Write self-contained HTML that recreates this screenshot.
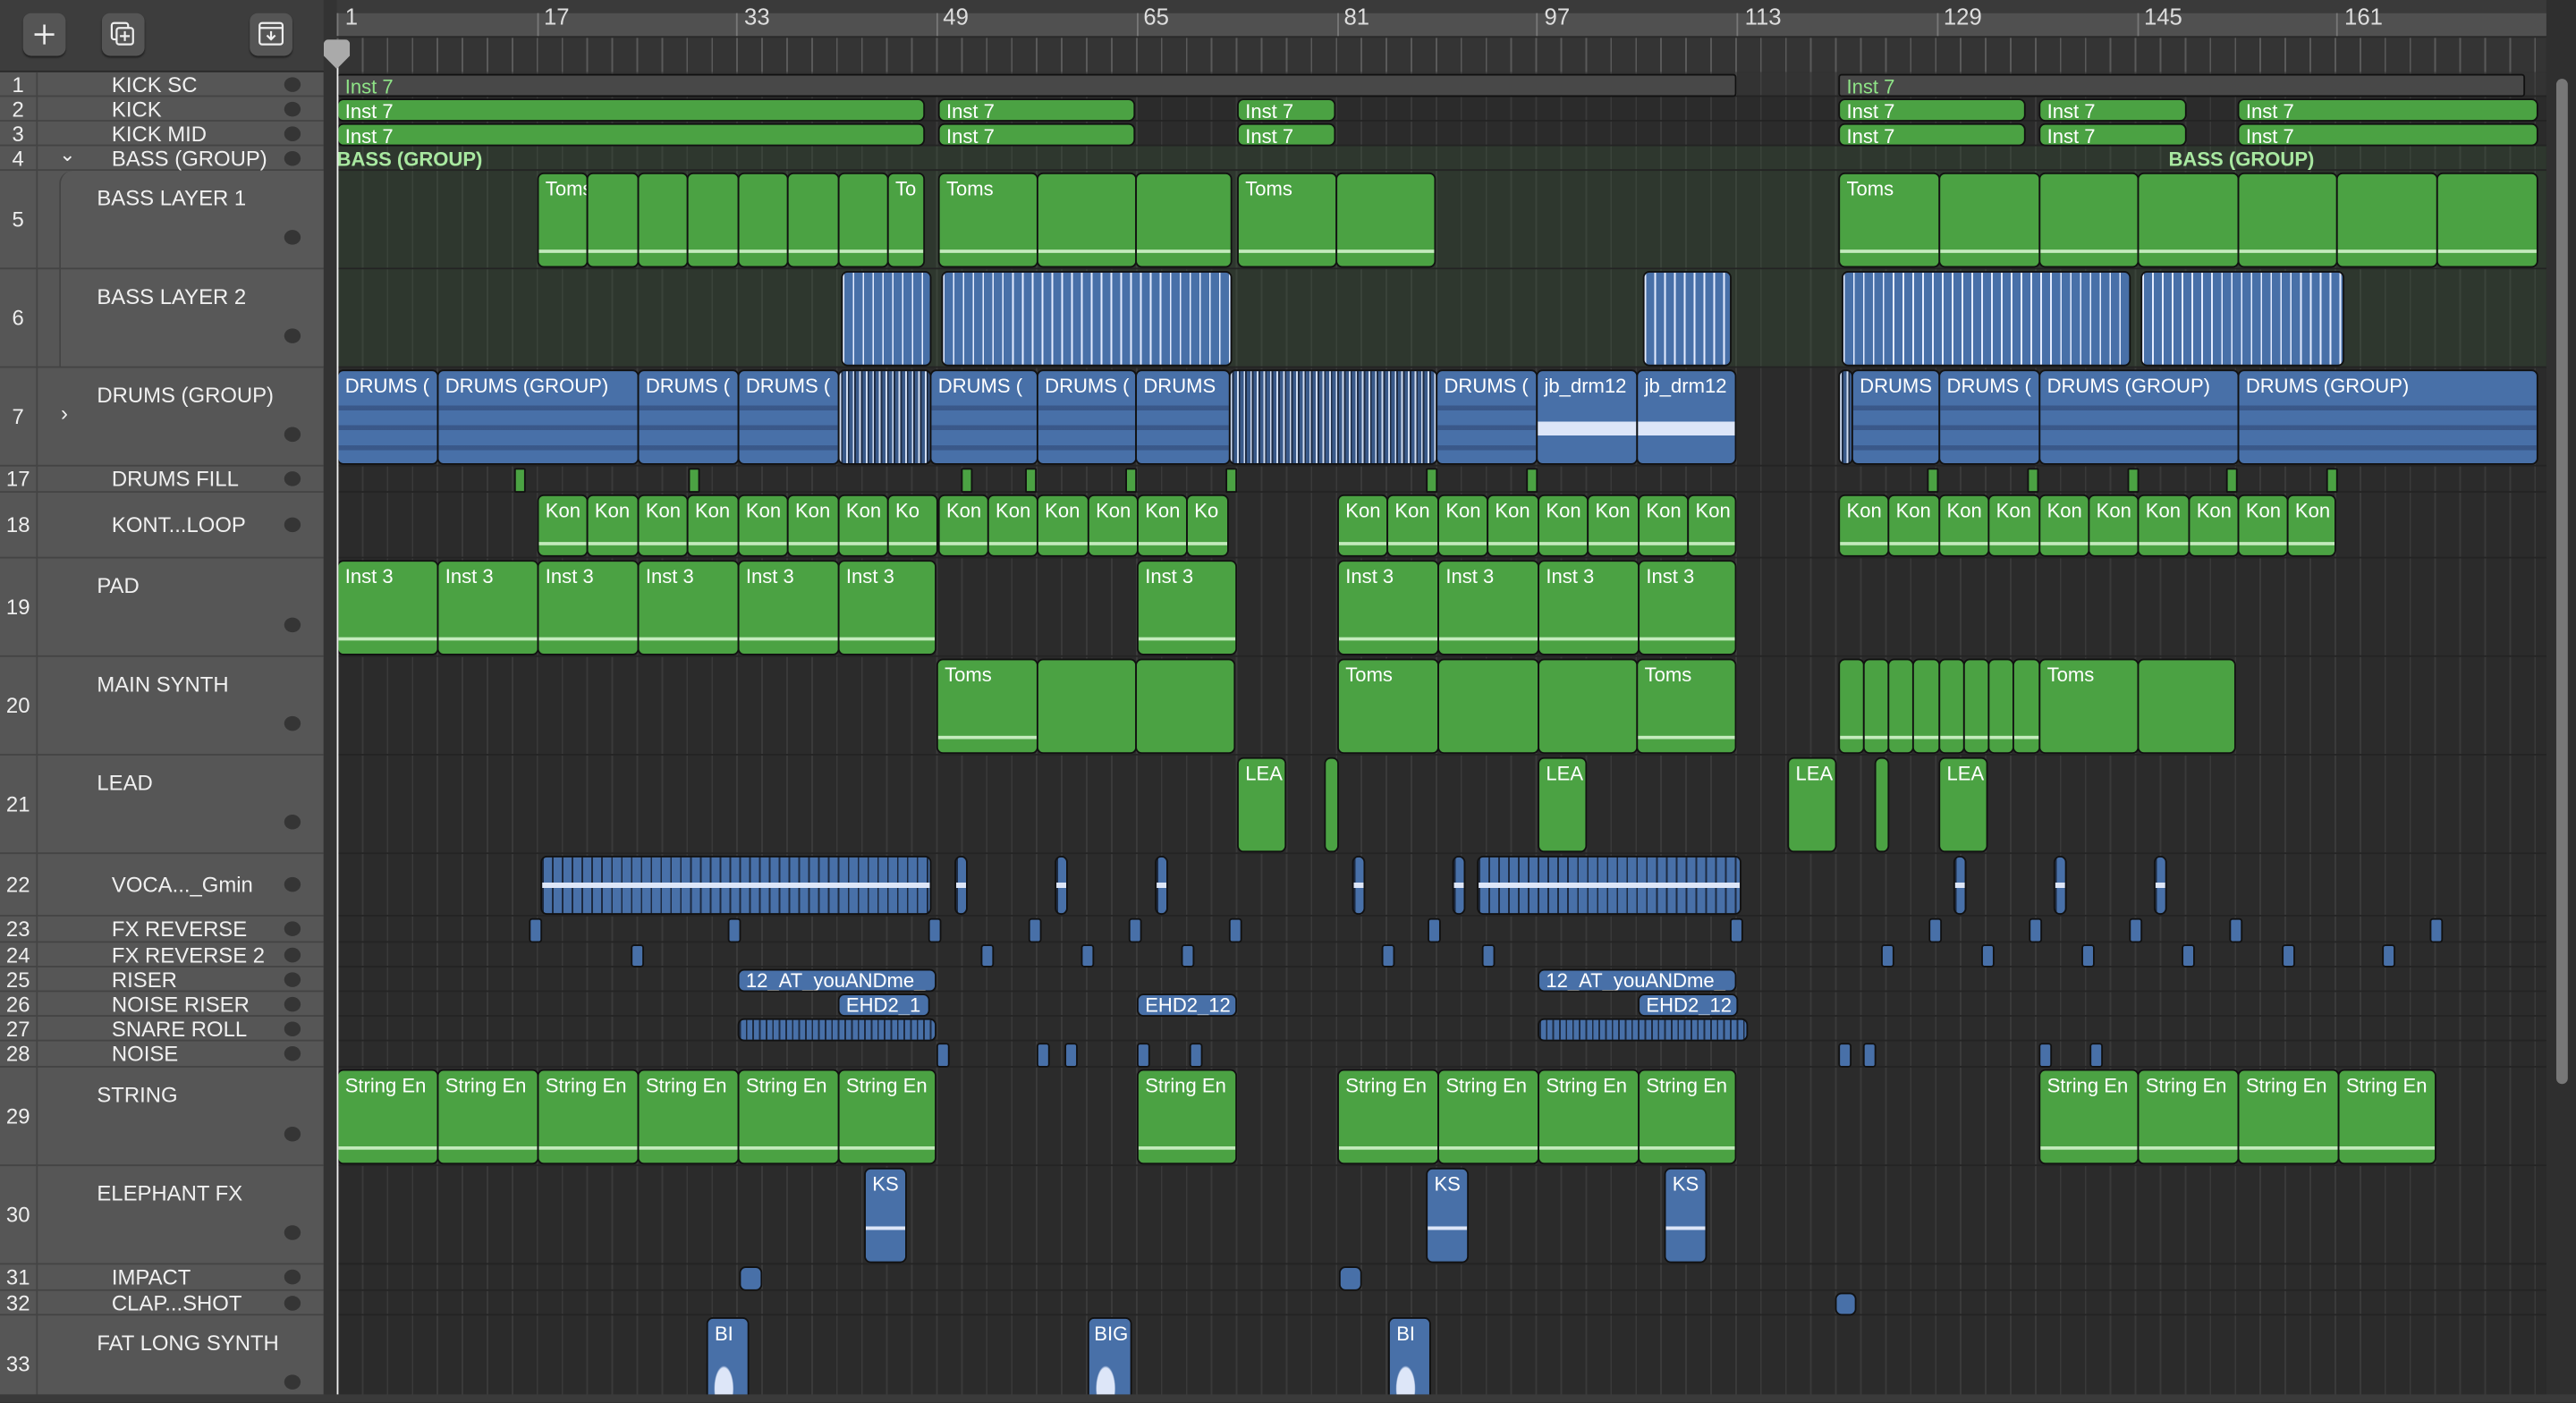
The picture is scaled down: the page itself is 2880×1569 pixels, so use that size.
<!DOCTYPE html>
<html><head><meta charset="utf-8"><style>
*{box-sizing:border-box;margin:0;padding:0}
html,body{width:2880px;height:1568px;overflow:hidden;background:#2b2b2b}
#w{position:absolute;left:0;top:0;width:1568px;height:854px;transform:scale(1.836735);transform-origin:0 0;font-family:"Liberation Sans",sans-serif;background:#2b2b2b;overflow:hidden}
.a{position:absolute}
#tb{left:0;top:0;width:204px;height:44px;background:#3d3d3d;border-bottom:1px solid #2a2a2a}
.btn{position:absolute;top:8px;width:26px;height:26px;border-radius:5px;background:#555;box-shadow:0 1px 1px #222}
#panel{left:0;top:44px;width:197px;height:810px;background:#565656}
.tr{position:absolute;left:0;width:197px;border-bottom:1px solid #444;color:#f0f0f0;font-size:13px}
.tr .n{position:absolute;left:0;width:22px;text-align:center;color:#eee;font-size:13px}
.tr .nm{position:absolute;left:68px;white-space:nowrap}
.tr.T .nm{left:59px;top:4px}
.tr .d{position:absolute;left:173px;width:10px;height:9px;border-radius:50%;background:#353535}
#ncol{left:22px;top:44px;width:1px;height:810px;background:#444}
#div{left:197px;top:0;width:8px;height:854px;background:#333}
#ruler{left:205px;top:8px;width:1345px;height:14px;background:#505050}
#ticks{left:205px;top:22px;width:1345px;height:22px;background:#343434 repeating-linear-gradient(90deg,#5a5a5a 0 1px,transparent 1px 15.2px);background-position:0 0;border-top:1px solid #2a2a2a}
.rn{position:absolute;top:3px;font-size:14px;color:#ddd}
.rl{position:absolute;top:0;width:1px;height:22px;background:#777}
#arr{left:205px;top:44px;width:1345px;height:810px;background:#2b2b2b repeating-linear-gradient(90deg,#3a3a3a 0 1px,transparent 1px 15.2px)}
.rowbg{position:absolute;left:205px;width:1345px;border-bottom:1px solid #242424}
.g,.b,.m{position:absolute;border:1px solid #111;border-radius:4px;color:#fff;font-size:12px;line-height:13px;padding:1px 4px;white-space:nowrap;overflow:hidden}
.g{background:#4ba243}
.b{background:#4870a8}
.m{background:#484848;color:#8fe487;border-radius:2px}
.t::after{content:"";position:absolute;left:0;right:0;bottom:8px;height:2px;background:#c4ebbd}
.k::after{content:"";position:absolute;left:0;right:0;bottom:6px;height:2px;background:#c4ebbd}
.st{background:#4870a8 repeating-linear-gradient(90deg,#e4ecff 0 1px,transparent 1px 6px)}
.dk{background:#3a5a8a repeating-linear-gradient(90deg,#d0dcf0 0 1px,#1e2c44 1px 2px,transparent 2px 4px)}
.vo{background:linear-gradient(transparent 45%,#dde6f8 45% 55%,transparent 55%),repeating-linear-gradient(90deg,#1d2a40 0 1px,#4870a8 1px 6px)}
.y1{top:45px;height:14px}.y2{top:60px;height:14px}.y3{top:75px;height:14px}
.y5{top:105px;height:58px}.y6{top:165px;height:58px}.y7{top:225px;height:58px}
.y17{top:285px;height:15px;padding:0;border-radius:1px}.y18{top:301px;height:38px}.y19{top:341px;height:58px}
.y20{top:401px;height:58px}.y21{top:461px;height:58px}.y22{top:521px;height:36px}
.y23{top:559px;height:15px;padding:0;border-radius:2px}.y24{top:575px;height:14px;padding:0;border-radius:2px}
.y25{top:590px;height:14px;line-height:12px;padding-top:0}.y26{top:605px;height:14px;line-height:12px;padding-top:0}.y27{top:620px;height:14px}.y28{top:635px;height:15px;padding:0;border-radius:2px}
.y29{top:651px;height:58px}.y30{top:711px;height:58px}.y31{top:771px;height:15px;padding:0}.y32{top:787px;height:14px;padding:0}.y33{top:802px;height:52px}
.y5,.y6,.y7,.y18,.y19,.y20,.y21,.y29,.y30,.y33{padding-top:3px}
.dr{font-size:12px}
.dr::after{content:"";position:absolute;left:0;right:0;top:17px;height:40px;background:repeating-linear-gradient(180deg,transparent 0 4px,rgba(40,60,100,.45) 4px 7px,transparent 7px 12px)}
</style></head><body><div id="w">
<div id="tb" class="a">
<div class="btn" style="left:14px"><svg width="26" height="26"><path d="M13 7v12M7 13h12" stroke="#eee" stroke-width="1.4"/></svg></div>
<div class="btn" style="left:62px"><svg width="26" height="26"><rect x="6" y="6" width="10" height="10" rx="1.5" fill="none" stroke="#eee" stroke-width="1.2"/><rect x="9" y="9" width="10" height="10" rx="1.5" fill="#555" stroke="#eee" stroke-width="1.2"/><path d="M14 11v6M11 14h6" stroke="#eee" stroke-width="1.2"/></svg></div>
<div class="btn" style="left:152px"><svg width="26" height="26"><rect x="6" y="6" width="14" height="13" rx="1.5" fill="none" stroke="#eee" stroke-width="1.2"/><path d="M6 9h14M13 11v5M10.5 13.5l2.5 2.5 2.5-2.5" fill="none" stroke="#eee" stroke-width="1.2"/></svg></div>
</div>
<div id="panel" class="a"></div>
<div class="tr" style="top:44px;height:15px"><span class="n">1</span><span class="nm">KICK SC</span><span class="d" style="top:3px"></span></div>
<div class="tr" style="top:59px;height:15px"><span class="n">2</span><span class="nm">KICK</span><span class="d" style="top:3px"></span></div>
<div class="tr" style="top:74px;height:15px"><span class="n">3</span><span class="nm">KICK MID</span><span class="d" style="top:3px"></span></div>
<div class="tr" style="top:89px;height:15px"><span class="n">4</span><span class="a" style="left:36px;top:-2px;font-size:12px">&#8964;</span><span class="nm">BASS (GROUP)</span><span class="d" style="top:3px"></span></div>
<div class="a" style="left:36px;top:104px;width:161px;height:120px;border-left:1px solid #444;border-top-left-radius:8px;background:#585858"></div>
<div class="tr T" style="top:104px;height:60px"><span class="n" style="top:22px">5</span><span class="nm" style="top:9px">BASS LAYER 1</span><span class="d" style="top:36px"></span></div>
<div class="tr T" style="top:164px;height:60px"><span class="n" style="top:22px">6</span><span class="nm" style="top:9px">BASS LAYER 2</span><span class="d" style="top:36px"></span></div>
<div class="tr T" style="top:224px;height:60px"><span class="n" style="top:22px">7</span><span class="a" style="left:37px;top:20px;font-size:13px">&#8250;</span><span class="nm" style="top:9px">DRUMS (GROUP)</span><span class="d" style="top:36px"></span></div>
<div class="tr" style="top:284px;height:16px"><span class="n">17</span><span class="nm">DRUMS FILL</span><span class="d" style="top:3px"></span></div>
<div class="tr" style="top:300px;height:40px"><span class="n" style="top:12px">18</span><span class="nm" style="top:12px">KONT...LOOP</span><span class="d" style="top:15px"></span></div>
<div class="tr T" style="top:340px;height:60px"><span class="n" style="top:22px">19</span><span class="nm" style="top:9px">PAD</span><span class="d" style="top:36px"></span></div>
<div class="tr T" style="top:400px;height:60px"><span class="n" style="top:22px">20</span><span class="nm" style="top:9px">MAIN SYNTH</span><span class="d" style="top:36px"></span></div>
<div class="tr T" style="top:460px;height:60px"><span class="n" style="top:22px">21</span><span class="nm" style="top:9px">LEAD</span><span class="d" style="top:36px"></span></div>
<div class="tr" style="top:520px;height:38px"><span class="n" style="top:11px">22</span><span class="nm" style="top:11px">VOCA..._Gmin</span><span class="d" style="top:14px"></span></div>
<div class="tr" style="top:558px;height:16px"><span class="n">23</span><span class="nm">FX REVERSE</span><span class="d" style="top:3px"></span></div>
<div class="tr" style="top:574px;height:15px"><span class="n">24</span><span class="nm">FX REVERSE 2</span><span class="d" style="top:3px"></span></div>
<div class="tr" style="top:589px;height:15px"><span class="n">25</span><span class="nm">RISER</span><span class="d" style="top:3px"></span></div>
<div class="tr" style="top:604px;height:15px"><span class="n">26</span><span class="nm">NOISE RISER</span><span class="d" style="top:3px"></span></div>
<div class="tr" style="top:619px;height:15px"><span class="n">27</span><span class="nm">SNARE ROLL</span><span class="d" style="top:3px"></span></div>
<div class="tr" style="top:634px;height:16px"><span class="n">28</span><span class="nm">NOISE</span><span class="d" style="top:3px"></span></div>
<div class="tr T" style="top:650px;height:60px"><span class="n" style="top:22px">29</span><span class="nm" style="top:9px">STRING</span><span class="d" style="top:36px"></span></div>
<div class="tr T" style="top:710px;height:60px"><span class="n" style="top:22px">30</span><span class="nm" style="top:9px">ELEPHANT FX</span><span class="d" style="top:36px"></span></div>
<div class="tr" style="top:770px;height:16px"><span class="n">31</span><span class="nm">IMPACT</span><span class="d" style="top:3px"></span></div>
<div class="tr" style="top:786px;height:15px"><span class="n">32</span><span class="nm">CLAP...SHOT</span><span class="d" style="top:3px"></span></div>
<div class="tr T" style="top:801px;height:53px"><span class="n" style="top:22px">33</span><span class="nm" style="top:9px">FAT LONG SYNTH</span><span class="d" style="top:36px"></span></div>
<div id="ncol" class="a"></div>
<div id="div" class="a"></div>
<div class="a" style="left:205px;top:0;width:1363px;height:8px;background:#3a3a3a"></div>
<div id="ruler" class="a">
<span class="rl" style="left:0"></span><span class="rn" style="left:5px;top:-6px">1</span>
<span class="rl" style="left:122px"></span><span class="rn" style="left:126px;top:-6px">17</span>
<span class="rl" style="left:243px"></span><span class="rn" style="left:248px;top:-6px">33</span>
<span class="rl" style="left:365px"></span><span class="rn" style="left:369px;top:-6px">49</span>
<span class="rl" style="left:487px"></span><span class="rn" style="left:491px;top:-6px">65</span>
<span class="rl" style="left:609px"></span><span class="rn" style="left:613px;top:-6px">81</span>
<span class="rl" style="left:730px"></span><span class="rn" style="left:735px;top:-6px">97</span>
<span class="rl" style="left:852px"></span><span class="rn" style="left:857px;top:-6px">113</span>
<span class="rl" style="left:974px"></span><span class="rn" style="left:978px;top:-6px">129</span>
<span class="rl" style="left:1096px"></span><span class="rn" style="left:1100px;top:-6px">145</span>
<span class="rl" style="left:1217px"></span><span class="rn" style="left:1222px;top:-6px">161</span>
</div>
<div id="ticks" class="a"></div>
<div id="arr" class="a"></div>
<div class="rowbg" style="top:44px;height:15px;background:rgba(255,255,255,.04)"></div>
<div class="rowbg" style="top:59px;height:15px"></div>
<div class="rowbg" style="top:74px;height:15px"></div>
<div class="rowbg" style="top:89px;height:15px;background:rgba(60,110,60,.18)"></div>
<div class="rowbg" style="top:104px;height:60px;background:rgba(60,110,60,.18)"></div>
<div class="rowbg" style="top:164px;height:60px;background:rgba(60,110,60,.18)"></div>
<div class="rowbg" style="top:224px;height:60px"></div>
<div class="rowbg" style="top:284px;height:16px"></div>
<div class="rowbg" style="top:300px;height:40px"></div>
<div class="rowbg" style="top:340px;height:60px"></div>
<div class="rowbg" style="top:400px;height:60px"></div>
<div class="rowbg" style="top:460px;height:60px"></div>
<div class="rowbg" style="top:520px;height:38px"></div>
<div class="rowbg" style="top:558px;height:16px"></div>
<div class="rowbg" style="top:574px;height:15px"></div>
<div class="rowbg" style="top:589px;height:15px"></div>
<div class="rowbg" style="top:604px;height:15px"></div>
<div class="rowbg" style="top:619px;height:15px"></div>
<div class="rowbg" style="top:634px;height:16px"></div>
<div class="rowbg" style="top:650px;height:60px"></div>
<div class="rowbg" style="top:710px;height:60px"></div>
<div class="rowbg" style="top:770px;height:16px"></div>
<div class="rowbg" style="top:786px;height:15px"></div>
<div class="rowbg" style="top:801px;height:53px"></div>

<div class="m y1" style="left:205px;width:852px">Inst 7</div>
<div class="m y1" style="left:1119px;width:418px">Inst 7</div>
<div class="g y2" style="left:205px;width:358px">Inst 7</div><div class="g y2" style="left:571px;width:120px">Inst 7</div><div class="g y2" style="left:753px;width:60px">Inst 7</div><div class="g y2" style="left:1119px;width:114px">Inst 7</div><div class="g y2" style="left:1241px;width:90px">Inst 7</div><div class="g y2" style="left:1362px;width:183px">Inst 7</div>
<div class="g y3" style="left:205px;width:358px">Inst 7</div><div class="g y3" style="left:571px;width:120px">Inst 7</div><div class="g y3" style="left:753px;width:60px">Inst 7</div><div class="g y3" style="left:1119px;width:114px">Inst 7</div><div class="g y3" style="left:1241px;width:90px">Inst 7</div><div class="g y3" style="left:1362px;width:183px">Inst 7</div>
<div class="a" style="left:205px;top:90px;font-size:12px;font-weight:bold;color:#a8e8a0">BASS (GROUP)</div>
<div class="a" style="left:1320px;top:90px;font-size:12px;font-weight:bold;color:#a8e8a0">BASS (GROUP)</div>
<div class="g y5 t" style="left:327px;width:31px">Toms</div><div class="g y5 t" style="left:357px;width:32px"></div><div class="g y5 t" style="left:388px;width:31px"></div><div class="g y5 t" style="left:418px;width:32px"></div><div class="g y5 t" style="left:449px;width:31px"></div><div class="g y5 t" style="left:479px;width:32px"></div><div class="g y5 t" style="left:510px;width:31px"></div><div class="g y5 t" style="left:540px;width:23px">To</div>
<div class="g y5 t" style="left:571px;width:61px">Toms</div><div class="g y5 t" style="left:631px;width:61px"></div><div class="g y5 t" style="left:691px;width:59px"></div>
<div class="g y5 t" style="left:753px;width:61px">Toms</div><div class="g y5 t" style="left:813px;width:61px"></div>
<div class="g y5 t" style="left:1119px;width:62px">Toms</div><div class="g y5 t" style="left:1180px;width:62px"></div><div class="g y5 t" style="left:1241px;width:61px"></div><div class="g y5 t" style="left:1301px;width:62px"></div><div class="g y5 t" style="left:1362px;width:61px"></div><div class="g y5 t" style="left:1422px;width:62px"></div><div class="g y5 t" style="left:1483px;width:62px"></div>
<div class="b y6 st" style="left:512px;width:55px"></div><div class="b y6 st" style="left:573px;width:177px"></div><div class="b y6 st" style="left:1000px;width:54px"></div><div class="b y6 st" style="left:1121px;width:176px"></div><div class="b y6 st" style="left:1303px;width:124px"></div>
<div class="b y7 dr" style="left:205px;width:62px">DRUMS (</div><div class="b y7 dr" style="left:266px;width:123px">DRUMS (GROUP)</div><div class="b y7 dr" style="left:388px;width:62px">DRUMS (</div><div class="b y7 dr" style="left:449px;width:62px">DRUMS (</div>
<div class="b y7 dk" style="left:510px;width:57px"></div>
<div class="b y7 dr" style="left:566px;width:66px">DRUMS (</div><div class="b y7 dr" style="left:631px;width:61px">DRUMS (</div><div class="b y7 dr" style="left:691px;width:58px">DRUMS</div>
<div class="b y7 dk" style="left:748px;width:127px"></div>
<div class="b y7 dr" style="left:874px;width:62px">DRUMS (</div>
<div class="b y7" style="left:935px;width:62px;background:linear-gradient(transparent 55%,#dde6f8 55% 70%,transparent 70%),#4870a8">jb_drm12</div><div class="b y7" style="left:996px;width:61px;background:linear-gradient(transparent 55%,#dde6f8 55% 70%,transparent 70%),#4870a8">jb_drm12</div>
<div class="b y7 dk" style="left:1119px;width:9px;padding:0"></div>
<div class="b y7 dr" style="left:1127px;width:54px">DRUMS</div><div class="b y7 dr" style="left:1180px;width:62px">DRUMS (</div><div class="b y7 dr" style="left:1241px;width:122px">DRUMS (GROUP)</div><div class="b y7 dr" style="left:1362px;width:183px">DRUMS (GROUP)</div>
<div class="g y17" style="left:313px;width:7px"></div><div class="g y17" style="left:419px;width:7px"></div><div class="g y17" style="left:585px;width:7px"></div><div class="g y17" style="left:624px;width:7px"></div><div class="g y17" style="left:685px;width:7px"></div><div class="g y17" style="left:746px;width:7px"></div><div class="g y17" style="left:868px;width:7px"></div><div class="g y17" style="left:929px;width:7px"></div><div class="g y17" style="left:1173px;width:7px"></div><div class="g y17" style="left:1234px;width:7px"></div><div class="g y17" style="left:1295px;width:7px"></div><div class="g y17" style="left:1355px;width:7px"></div><div class="g y17" style="left:1416px;width:7px"></div>
<div class="g y18 k" style="left:327px;width:31px">Kon</div><div class="g y18 k" style="left:357px;width:32px">Kon</div><div class="g y18 k" style="left:388px;width:31px">Kon</div><div class="g y18 k" style="left:418px;width:32px">Kon</div><div class="g y18 k" style="left:449px;width:31px">Kon</div><div class="g y18 k" style="left:479px;width:32px">Kon</div><div class="g y18 k" style="left:510px;width:31px">Kon</div><div class="g y18 k" style="left:540px;width:31px">Ko</div>
<div class="g y18 k" style="left:571px;width:31px">Kon</div><div class="g y18 k" style="left:601px;width:31px">Kon</div><div class="g y18 k" style="left:631px;width:32px">Kon</div><div class="g y18 k" style="left:662px;width:31px">Kon</div><div class="g y18 k" style="left:692px;width:31px">Kon</div><div class="g y18 k" style="left:722px;width:26px">Ko</div>
<div class="g y18 k" style="left:814px;width:31px">Kon</div><div class="g y18 k" style="left:844px;width:32px">Kon</div><div class="g y18 k" style="left:875px;width:31px">Kon</div><div class="g y18 k" style="left:905px;width:32px">Kon</div><div class="g y18 k" style="left:936px;width:31px">Kon</div><div class="g y18 k" style="left:966px;width:32px">Kon</div><div class="g y18 k" style="left:997px;width:31px">Kon</div><div class="g y18 k" style="left:1027px;width:30px">Kon</div>
<div class="g y18 k" style="left:1119px;width:31px">Kon</div><div class="g y18 k" style="left:1149px;width:32px">Kon</div><div class="g y18 k" style="left:1180px;width:31px">Kon</div><div class="g y18 k" style="left:1210px;width:32px">Kon</div><div class="g y18 k" style="left:1241px;width:31px">Kon</div><div class="g y18 k" style="left:1271px;width:31px">Kon</div><div class="g y18 k" style="left:1301px;width:32px">Kon</div><div class="g y18 k" style="left:1332px;width:31px">Kon</div><div class="g y18 k" style="left:1362px;width:31px">Kon</div><div class="g y18 k" style="left:1392px;width:30px">Kon</div>
<div class="g y19 t" style="left:205px;width:62px">Inst 3</div><div class="g y19 t" style="left:266px;width:62px">Inst 3</div><div class="g y19 t" style="left:327px;width:62px">Inst 3</div><div class="g y19 t" style="left:388px;width:62px">Inst 3</div><div class="g y19 t" style="left:449px;width:62px">Inst 3</div><div class="g y19 t" style="left:510px;width:60px">Inst 3</div>
<div class="g y19 t" style="left:692px;width:61px">Inst 3</div>
<div class="g y19 t" style="left:814px;width:62px">Inst 3</div><div class="g y19 t" style="left:875px;width:62px">Inst 3</div><div class="g y19 t" style="left:936px;width:62px">Inst 3</div><div class="g y19 t" style="left:997px;width:60px">Inst 3</div>
<div class="g y20 t" style="left:570px;width:62px">Toms</div><div class="g y20" style="left:631px;width:61px"></div><div class="g y20" style="left:691px;width:61px"></div>
<div class="g y20" style="left:814px;width:62px">Toms</div><div class="g y20" style="left:875px;width:62px"></div><div class="g y20" style="left:936px;width:61px"></div><div class="g y20 t" style="left:996px;width:61px">Toms</div>
<div class="g y20 t" style="left:1119px;width:16px;padding:0"></div><div class="g y20 t" style="left:1134px;width:16px;padding:0"></div><div class="g y20 t" style="left:1149px;width:16px;padding:0"></div><div class="g y20 t" style="left:1164px;width:17px;padding:0"></div><div class="g y20 t" style="left:1180px;width:16px;padding:0"></div><div class="g y20 t" style="left:1195px;width:16px;padding:0"></div><div class="g y20 t" style="left:1210px;width:16px;padding:0"></div><div class="g y20 t" style="left:1225px;width:17px;padding:0"></div>
<div class="g y20" style="left:1241px;width:61px">Toms</div><div class="g y20" style="left:1301px;width:60px"></div>
<div class="g y21" style="left:753px;width:30px">LEA</div><div class="g y21" style="left:806px;width:9px;padding:0"></div><div class="g y21" style="left:936px;width:30px">LEA</div><div class="g y21" style="left:1088px;width:30px">LEA</div><div class="g y21" style="left:1141px;width:9px;padding:0"></div><div class="g y21" style="left:1180px;width:30px">LEA</div>
<div class="b y22 vo" style="left:329px;width:238px"></div><div class="b y22 vo" style="left:581px;width:8px;padding:0"></div><div class="b y22 vo" style="left:642px;width:8px;padding:0"></div><div class="b y22 vo" style="left:703px;width:8px;padding:0"></div><div class="b y22 vo" style="left:823px;width:8px;padding:0"></div><div class="b y22 vo" style="left:884px;width:8px;padding:0"></div><div class="b y22 vo" style="left:899px;width:161px"></div><div class="b y22 vo" style="left:1189px;width:8px;padding:0"></div><div class="b y22 vo" style="left:1250px;width:8px;padding:0"></div><div class="b y22 vo" style="left:1311px;width:8px;padding:0"></div>
<div class="b y23" style="left:322px;width:8px"></div><div class="b y23" style="left:443px;width:8px"></div><div class="b y23" style="left:565px;width:8px"></div><div class="b y23" style="left:626px;width:8px"></div><div class="b y23" style="left:687px;width:8px"></div><div class="b y23" style="left:748px;width:8px"></div><div class="b y23" style="left:869px;width:8px"></div><div class="b y23" style="left:1053px;width:8px"></div><div class="b y23" style="left:1174px;width:8px"></div><div class="b y23" style="left:1235px;width:8px"></div><div class="b y23" style="left:1296px;width:8px"></div><div class="b y23" style="left:1357px;width:8px"></div><div class="b y23" style="left:1479px;width:8px"></div>
<div class="b y24" style="left:384px;width:8px"></div><div class="b y24" style="left:597px;width:8px"></div><div class="b y24" style="left:658px;width:8px"></div><div class="b y24" style="left:719px;width:8px"></div><div class="b y24" style="left:841px;width:8px"></div><div class="b y24" style="left:902px;width:8px"></div><div class="b y24" style="left:1145px;width:8px"></div><div class="b y24" style="left:1206px;width:8px"></div><div class="b y24" style="left:1267px;width:8px"></div><div class="b y24" style="left:1328px;width:8px"></div><div class="b y24" style="left:1389px;width:8px"></div><div class="b y24" style="left:1450px;width:8px"></div>
<div class="b y25" style="left:449px;width:121px">12_AT_youANDme_</div><div class="b y25" style="left:936px;width:121px">12_AT_youANDme_</div>
<div class="b y26" style="left:510px;width:56px">EHD2_1</div><div class="b y26" style="left:692px;width:61px">EHD2_12</div><div class="b y26" style="left:997px;width:61px">EHD2_12</div>
<div class="b y27" style="left:449px;width:121px;background:#4870a8 repeating-linear-gradient(90deg,#1d2a40 0 1px,transparent 1px 4px)"></div><div class="b y27" style="left:936px;width:128px;background:#4870a8 repeating-linear-gradient(90deg,#1d2a40 0 1px,transparent 1px 4px)"></div>
<div class="b y28" style="left:570px;width:8px"></div><div class="b y28" style="left:631px;width:8px"></div><div class="b y28" style="left:648px;width:8px"></div><div class="b y28" style="left:692px;width:8px"></div><div class="b y28" style="left:724px;width:8px"></div><div class="b y28" style="left:1119px;width:8px"></div><div class="b y28" style="left:1134px;width:8px"></div><div class="b y28" style="left:1241px;width:8px"></div><div class="b y28" style="left:1272px;width:8px"></div>
<div class="g y29 t" style="left:205px;width:62px">String En</div><div class="g y29 t" style="left:266px;width:62px">String En</div><div class="g y29 t" style="left:327px;width:62px">String En</div><div class="g y29 t" style="left:388px;width:62px">String En</div><div class="g y29 t" style="left:449px;width:62px">String En</div><div class="g y29 t" style="left:510px;width:60px">String En</div>
<div class="g y29 t" style="left:692px;width:61px">String En</div>
<div class="g y29 t" style="left:814px;width:62px">String En</div><div class="g y29 t" style="left:875px;width:62px">String En</div><div class="g y29 t" style="left:936px;width:62px">String En</div><div class="g y29 t" style="left:997px;width:60px">String En</div>
<div class="g y29 t" style="left:1241px;width:61px">String En</div><div class="g y29 t" style="left:1301px;width:62px">String En</div><div class="g y29 t" style="left:1362px;width:62px">String En</div><div class="g y29 t" style="left:1423px;width:60px">String En</div>
<div class="b y30" style="left:526px;width:26px;background:linear-gradient(transparent 62%,#dde6f8 62% 66%,transparent 66%),#4870a8">KS</div><div class="b y30" style="left:868px;width:26px;background:linear-gradient(transparent 62%,#dde6f8 62% 66%,transparent 66%),#4870a8">KS</div><div class="b y30" style="left:1013px;width:26px;background:linear-gradient(transparent 62%,#dde6f8 62% 66%,transparent 66%),#4870a8">KS</div>
<div class="b y31" style="left:450px;width:14px"></div><div class="b y31" style="left:815px;width:14px"></div>
<div class="b y32" style="left:1117px;width:13px"></div>
<div class="b y33" style="left:430px;width:26px;background:radial-gradient(ellipse 6px 14px at 40% 85%,#dde6f8 90%,transparent 100%),#4870a8">BI</div><div class="b y33" style="left:662px;width:27px;padding-left:3px;background:radial-gradient(ellipse 6px 14px at 40% 85%,#dde6f8 90%,transparent 100%),#4870a8">BIG</div><div class="b y33" style="left:845px;width:26px;background:radial-gradient(ellipse 6px 14px at 40% 85%,#dde6f8 90%,transparent 100%),#4870a8">BI</div>
<div class="a" style="left:205px;top:26px;width:1px;height:828px;background:#eee"></div>
<div class="a" style="left:197px;top:24px;width:16px;height:18px;background:#aaa;clip-path:polygon(0 0,100% 0,100% 55%,50% 100%,0 55%);border-radius:3px"></div>
<div class="a" style="left:1550px;top:0;width:18px;height:854px;background:#2f2f2f"></div>
<div class="a" style="left:1556px;top:48px;width:7px;height:612px;border-radius:4px;background:#777"></div>
<div class="a" style="left:0;top:849px;width:1568px;height:5px;background:#3a3a3a"></div>
</div></body></html>
